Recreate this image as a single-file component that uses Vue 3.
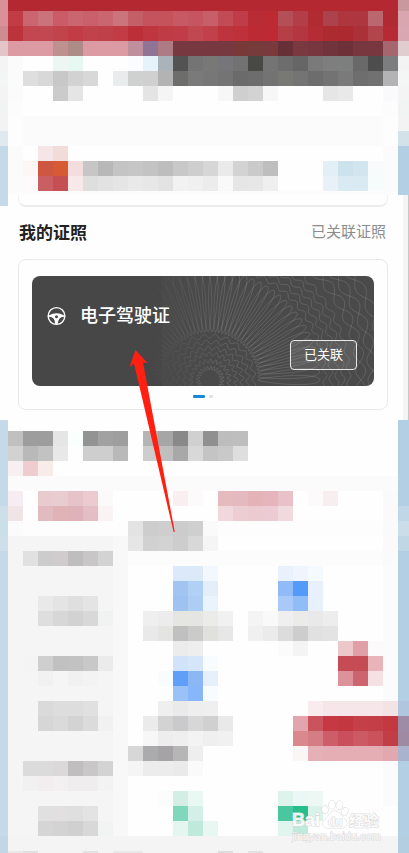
<template>
  <main class="page">
    <div class="mosaic" aria-hidden="true">
      <div v-for="(row, r) in topRows" :key="r" class="mosaic-row" :class="row.size">
        <i v-for="(color, c) in row.cells" :key="c" :style="{ background: color }"></i>
      </div>
    </div>

    <section class="licenses">
      <div class="prev-card">
        <span class="prev-edge"></span>
        <span class="prev-end"></span>
      </div>

      <header class="section-head">
        <h2>我的证照</h2>
        <a href="#">已关联证照</a>
      </header>

      <div class="card">
        <article class="license">
          <svg class="guilloche" viewBox="0 0 342 110" preserveAspectRatio="xMaxYMid slice" aria-hidden="true">
            <defs>
              <linearGradient id="fade" gradientUnits="userSpaceOnUse" x1="120" y1="0" x2="190" y2="0">
                <stop offset="0" stop-color="#fff" stop-opacity="0" />
                <stop offset="1" stop-color="#fff" stop-opacity="0.15" />
              </linearGradient>
            </defs>
            <rect class="tint" x="130" y="0" width="212" height="110" />
            <path v-for="(d, i) in curves" :key="i" :d="d" stroke="url(#fade)" />
          </svg>
          <h3 class="license-name">
            <svg class="wheel" viewBox="0 0 20 20" aria-hidden="true">
              <circle cx="10" cy="10" r="8.8" fill="none" stroke="#fff" stroke-width="1.5" />
              <path d="M1.8 9.4 Q6 7 10 7 Q14 7 18.2 9.4 L18 10.8 Q14.6 10.8 13 12.8 Q11.6 14.6 11.4 18.4 L8.6 18.4 Q8.4 14.6 7 12.8 Q5.4 10.8 2 10.8 Z" fill="#fff" />
              <circle cx="10" cy="10.8" r="1.6" fill="#4b4a4b" />
            </svg>
            <span>电子驾驶证</span>
          </h3>
          <button class="linked-btn" type="button">已关联</button>
        </article>
        <div class="dots">
          <span class="dot active"></span>
          <span class="dot"></span>
        </div>
      </div>
    </section>

    <div class="mosaic" aria-hidden="true">
      <div v-for="(row, r) in bottomRows" :key="r" class="mosaic-row" :class="row.size">
        <i v-for="(color, c) in row.cells" :key="c" :style="{ background: color }"></i>
      </div>
    </div>

    <svg class="arrow" viewBox="0 0 46 183" aria-hidden="true">
      <path d="M6.5 0 L18.5 13 L14 12.5 L45.8 182 L44.6 182 L5 13.5 L0.5 17 Z" fill="#ff2012" />
    </svg>

    <svg class="watermark" viewBox="0 0 94 46" role="img" aria-label="Baidu经验">
      <g class="wm-shape">
        <ellipse cx="34" cy="9.5" rx="3" ry="4" transform="rotate(-15 34 9.5)" />
        <ellipse cx="41" cy="4.8" rx="3.2" ry="4.2" />
        <ellipse cx="48.5" cy="5.2" rx="3.2" ry="4.2" transform="rotate(12 48.5 5.2)" />
        <ellipse cx="54" cy="11.5" rx="3" ry="4" transform="rotate(25 54 11.5)" />
        <path d="M44 11 C48 11 50 15 53 18 C58 23 56 28 50 28 L38 28 C31 28 30 23 35 18 C38 15 40 11 44 11 Z" />
      </g>
      <text x="1" y="26" class="wm-bai">Bai</text>
      <text x="37" y="26" class="wm-du">du</text>
      <text x="58" y="26" class="wm-cn">经验</text>
      <text x="1" y="40" class="wm-url">jingyan.baidu.com</text>
    </svg>
  </main>
</template>

<script setup>
const COLUMNS = 28;

// cells: groups split by "|", each one a start column followed by its colors
const makeRow = (left, base, right, cells = '', size = '') => {
  const colors = Array(COLUMNS).fill('#' + base);
  colors[0] = '#' + left;
  colors[COLUMNS - 1] = '#' + right;
  for (const group of cells.split('|').filter(Boolean)) {
    const [start, ...list] = group.trim().split(' ');
    list.forEach((color, i) => {
      colors[Number(start) - 1 + i] = '#' + color;
    });
  }
  return { cells: colors, size };
};

const BLUE_L = 'c5dae8';
const BLUE_R = 'b3cfe3';

const topRows = [
  makeRow('d99098', 'b42832', 'c9989f', '', 'first'),
  makeRow('d99098', 'b12a31', 'd9a5af', '2 c13c45 c96670 cb727a c95c66 cb6570 c9606b c9666f cb747c c55f67 c3535c c5535b c65964 c45561 c65f68 c14c56 bf3c48 b92c35 bd2a31 b44f57 b33e48 b02b32 ac424b ad363f ad363f bb6770'),
  makeRow('cf8c90', 'b62a35', 'd9a7b1', '2 bd333c c24750 c24750 c1434b c13c45 c1424b c0404a c13c45 bd2f38 bf3641 c03c45 c03c46 c14851 c2404a bd343e bf313a bc2b34 be2a33 b53e47 b43640 b42d36 ac2a30 ac292f ac3037 b2454c'),
  makeRow('e3c4c8', 'dc9aa2', 'e0cdd0', '5 be918f ad8b86|10 c08f9d 907495 ae7b84 783840 783840 783840 783840 793939 773b3b 7a3a3d 672f36 7a383f 78363e 71343c 6e3138 78363e 78363e a5666e'),
  makeRow('f4f4f4', 'fefefe', 'f3f3f3', '2 fbfbfb|5 edf6f2 e7f8f2|10 fbfcff e6f3fb abb3ba 535353 747474 787876 767579 737272 484844 747474 6d6d6d 666666 7a7a7a 7e7e7e 7b7f7e 696969 4d4d4d 7c7d7f'),
  makeRow('f4f5f5', 'fefefe', 'f4f6f5', '2 fbfbfb dedede d8d8d8 c8c8c8 d2d2d2 d8d8d8|9 e9ecec cfd1d0 d0d0d0 b3b3b3 6d6d6b 7a7a7a 777777 747474 6b6b6b 6d6d6d 737373 787875 747474 6d6d6d 737373 7a7a7a 6e6e6e 717171 b3b3b5'),
  makeRow('f4f4f4', 'fefefe', 'f4f4f4', '2 fbfbfb|5 cbcbcb e5e5e5|11 e4e4e4 f5f5f5|16 f7f7f7 cfcfcf d3d3d3 f7f7f7|23 e6e6e6 e9e9e9|27 fafafc'),
  makeRow('f2f4f3', 'fefefe', 'f2f3f3', '2 fcfcfc|27 fcfcfc'),
  makeRow('f2f3f2', 'fbfbfb', 'f3f3f3', '2 fdfdfd|27 fdfdfd'),
  makeRow('dfe9ef', 'fbfbfb', 'd3e1e9', '2 fdfdfd|27 fdfdfd'),
  makeRow(BLUE_L, 'fefefe', BLUE_R, '2 fbfbfb|4 f5e5e6 f1dcda|27 fbfbfb'),
  makeRow(BLUE_L, 'fefefe', BLUE_R, '2 fbfbfb fcf7f5 cf5641 d65b35 f3dddf c6c6c6 b8b8b8 c4c4c4 c6c6c6 c3c3c3 bdbdbd c8c8c8 cecece d6d6d6 eaeaea d3d3d3 cacaca bebebe|23 e3eff6 cce3ee d2e6f0 f7fbfb fbfbfb'),
  makeRow(BLUE_L, 'fefefe', BLUE_R, '2 fbfbfb fcfafa c95f63 c54f52 f7e9e9 dedede e2e2e2 e5e5e5 e9e9e9 e7e7e7 e3e3e3 f2f2f2 f0f0f0 ececec f9f9f9 e6e6e6 e7e7e7 efefef|23 e7f1f6 d9eaf2 d9eaf2 f6fbfb fbfbfb'),
  makeRow(BLUE_L, 'fcfcfc', BLUE_R, '', 'thin'),
];

const plain = (cells) => makeRow(BLUE_L, 'fefefe', BLUE_R, cells);
// rows that have the grey category list on the left
const withMenu = (cells, left = BLUE_L, right = BLUE_R) =>
  makeRow(left, 'fefefe', right, '2 f5f5f5 f5f5f5 f5f5f5 f5f5f5 f5f5f5 f5f5f5 f5f5f5 f8f8f8|' + cells);

const bottomRows = [
  makeRow(BLUE_L, 'fefefe', BLUE_R, '', 'first'),
  plain('2 c0c0c0 9d9d9d 9d9d9d e5e5e5 fafffd 939393 a1a1a1 9e9e9e|11 b5b5b5 a6a6a6 898989 d0d0d0 909090 bdbdbd bebebe'),
  plain('2 d2d2d2 b9b9b9 c2c2c2 e8e8e8 fefefe cecece cecece b9b9b9|11 cdcdcd bfbfbf a8a8a8 d8d8d8 c4c4c4 c9c9c9 dedede'),
  plain('2 f8eff0 efccd0 f8eceb'),
  makeRow(BLUE_L, 'fbfbfb', BLUE_R),
  plain('2 f7ecf1 fefefe e9cacf e9cccf e6c3c9 ebcbd0 fafafa|13 f9eef0 fdfafb|16 e6bbbe e5b9c0 e3b3b8 e5b4bd e8c2c8|22 fcfafb f7efef|27 fafafa'),
  makeRow('cddfe8', 'fefefe', 'bfd7e6', '2 f1e4e7 fefefe e1bbc0 e0b3b7 dfb1b9 e4bec4 f9f4f3|16 f0d8dc eccdd2 ebcbcf ecccd2 f1dadd|27 fafafa'),
  makeRow('cbdfea', 'fdfdfd', 'cbdde9', '2 fbfbfb|10 e3e3e3 cdcdce cecece cccccd cfcfcf fafafa|27 fafafa'),
  withMenu('10 e6e6e6 d1d1d1 d3d3d3 cdcdcd d8d8d8 f5f5f5|27 fafafa', 'cddfea', 'c0d7e5'),
  withMenu('3 e1e1e1 cbcccb d0cccd bebebe c8c6c7 d3d3d3|10 fcfcfc fcfcfc fcfcfc fcfcfc fcfcfc fcfcfc fcfcfc fcfcfc fcfcfc fcfcfc fcfcfc fcfcfc fcfcfc fcfcfc fcfcfc fcfcfc fcfcfc fafafa'),
  withMenu('13 dbe9fa dce9f8 f3f8ff|20 e9f1fd eff4fd f5faff|27 fbfbfb'),
  withMenu('13 a2c4f1 b1d0f5 e4eef9|20 91bbf7 549af9 e7f0fc|27 fbfbfb'),
  withMenu('4 e9e9e9 e4e4e4 dfdfdf e4e4e4|13 9ec3f1 adcdf5 eaf3fb|20 a9caf8 90bdf8 e8f0fb|27 fbfbfb'),
  withMenu('4 dedede d7d7d7 d2d2d2 d8d8d8 f0f3f2|11 efefef ececec e5e5e2 e5e5e2 ebebe9 f1f1f1|18 f4f4f4 f9f9f9 efefef ebebe9 e9e9e9 ededed|27 fbfbfb'),
  withMenu('11 e9e9e9 e4e4e1 c0c0c0 cbcbc9 e0e0dd e7e7e7|18 f0f0f0 ebebeb dcdcdc cdcdcd e1e1e1 e3e3e3|27 fbfbfb'),
  withMenu('13 ececec eeeeee|20 fbfbfb f4f4f4|24 ecc8cb e1a0a7 fcfafa fbfbfb'),
  withMenu('3 f4f4f4 cfcfcf c1c1c1 c2c2c2 c8c8c8 ebebeb|13 d1e3fb d5e6fb f8fcff|24 c54b54 c54b54 e8b3b9 fbfbfb'),
  withMenu('4 f1f1f1 f5f5f5 f1f1f1 f3f3f3|12 f9fcff 5f9ff8 8bb7f4 e5f0fb|24 dc929b cc656f f5e1e3 fbfbfb'),
  withMenu('13 9bc2f7 88b6fb f8fbff|27 fbfbfb'),
  withMenu('4 dadada dddddd dddddd e0e0e0|12 efefef eaeaea eeeeee efefef|22 f8ecee f6e6e9 f6e6e9 f6e6e9 f6e6e9 f3e3e5 b0c6df'),
  withMenu('4 d6d6d6 dadada d3d3d3 dbdbdb f1f1f1|11 ebebeb d3d3d3 cacacd d7d7d7 d0d0d0 e9e9e9|21 e2a4ad cb535e c43943 c33740 c53f48 c43e47 c33841 9e8ba5'),
  withMenu('11 f7f7f7 ededed efefef f3f3f3 efefef f1f1f1|21 da878e d47d85 cd5d69 c94f5c cb5a65 c9525b c23e46 9f8aa3'),
  withMenu('10 d7d7d7 abaaad a5a3a6 b6b6b6 eeeeee|21 faf6f6 e5b1b6 e5aeb4 e5aeb4 e5aeb4 e5aeb4 e1a9af aab3ce'),
  withMenu('3 dbdbdb dbdbdb dad8d9 c0bebf c9c7c8 d3d3d3|10 f5f5f5 ececed ececed eaeaea fafafa|27 fbfbfb'),
  withMenu('3 f1f1f1 f2eef0 f3f0f2 efedee efedee f3f3f3|27 fbfbfb'),
  withMenu('12 fafdfc d3efe5 e9f8f3|20 def3ec eaf8f5 edf8f5|27 fbfbfb'),
  withMenu('4 e0e0e0 e2dfe0 dfdfdf e3e3e3|13 7fd8bb d4efe7|20 49c89f 25be8c dbf2ea'),
  withMenu('4 d5d5d5 d3d3d3 d0d0d0 d8d8d8 f1f4f3|13 e5f6f0 bfeadb e9f7f2|20 e0f5ee bfeadc'),
  makeRow('c1d7e5', 'f4f4f4', 'b3cee0'),
  makeRow('c1d7e5', 'f4f4f4', 'b3cee0', '2 e8e8e8 e0e0e0|7 e2e2e2|9 e8e8e8 e8e8e8|16 dddddd|18 e2e2e2', 'last'),
];

const CENTER = { x: 178, y: 104 };

const toPath = (steps, pointAt) => {
  const points = [];
  for (let i = 0; i <= steps; i++) {
    const [r, a] = pointAt((i / steps) * Math.PI * 2);
    points.push(`${(CENTER.x + r * Math.cos(a)).toFixed(1)} ${(CENTER.y + r * Math.sin(a)).toFixed(1)}`);
  }
  return 'M' + points.join('L');
};

// banknote-like ring: radius swings around a circle as the angle turns
const rosette = (radius, swing, waves, phase) =>
  toPath(900, (a) => [radius + swing * Math.sin(waves * a + phase), a]);

// long thin loop that points away from the center
const petal = (angle) =>
  toPath(40, (t) => [79 + 31 * Math.cos(t), angle + 0.055 * Math.sin(t)]);

const curves = [
  ...[12, 19, 26, 32, 38, 44].map((r, i) => rosette(r, 2, 24, i)),
  ...Array.from({ length: 44 }, (_, i) => petal(Math.PI + (i / 43) * Math.PI)),
  ...[115, 121, 127, 133, 139].map((r) => rosette(r, 2, 54, r / 4)),
  rosette(151, 5, 26, 0),
  rosette(151, 5, 26, Math.PI),
  rosette(163, 5, 26, 1.5),
  rosette(163, 5, 26, 1.5 + Math.PI),
  rosette(176, 5, 26, 0),
  rosette(176, 5, 26, Math.PI),
];
</script>

<style>
body {
  margin: 0;
}
</style>

<style scoped>
.page {
  position: relative;
  overflow: hidden;
  background: #fff;
  font-family: "Liberation Sans", "Noto Sans CJK SC", sans-serif;
}
.mosaic-row {
  display: grid;
  grid-template-columns: 8fr repeat(26, 15fr) 11fr;
  height: 15px;
}
.mosaic-row.first {
  height: 11px;
}
.mosaic-row.thin {
  height: 4px;
}
.mosaic-row.last {
  height: 2px;
}
.licenses {
  background: #fefefe;
  border-right: 1px solid #c8c8c8;
  box-shadow: inset -5px 0 #f4f4f4;
  padding-bottom: 10px;
}
.prev-card {
  display: flex;
  gap: 10px;
  height: 12px;
  padding-right: 20px;
}
.prev-edge {
  width: 8px;
  height: 11px;
  background: #c5dae8;
}
.prev-end {
  flex: 1;
  border: 1px solid #f2f2f2;
  border-top: 0;
  border-bottom: 2px solid #ececec;
  border-radius: 0 0 8px 8px;
}
.section-head {
  display: flex;
  align-items: flex-start;
  justify-content: space-between;
  height: 52px;
  box-sizing: border-box;
  padding: 14px 22px 0 19px;
}
.section-head h2 {
  margin: 0;
  font-size: 17px;
  line-height: 26px;
  font-weight: 700;
  color: #222;
}
.section-head a {
  font-size: 15px;
  line-height: 22px;
  color: #8c8c8c;
  text-decoration: none;
}
.card {
  margin: 0 20px 0 18px;
  padding: 16px 13px 11px;
  border: 1px solid #e9e9eb;
  border-radius: 8px;
}
.license {
  position: relative;
  display: flex;
  flex-direction: column;
  justify-content: space-between;
  overflow: hidden;
  height: 110px;
  box-sizing: border-box;
  padding: 26px 17px 16px 15px;
  border-radius: 8px;
  background: #484748;
}
.guilloche {
  position: absolute;
  inset: 0;
  width: 100%;
  height: 100%;
}
.guilloche path {
  fill: none;
  stroke-width: 0.8;
}
.tint {
  fill: rgba(255, 255, 255, 0.02);
}
.license-name {
  position: relative;
  display: flex;
  align-items: center;
  gap: 14px;
  margin: 0;
  font-size: 18px;
  line-height: 28px;
  font-weight: 500;
  color: #fff;
}
.wheel {
  width: 19px;
  height: 20px;
}
.linked-btn {
  position: relative;
  align-self: flex-end;
  width: 67px;
  height: 30px;
  padding: 0;
  border: 1px solid #e8e8e8;
  border-radius: 4px;
  background: rgba(255, 255, 255, 0.1);
  font: inherit;
  font-size: 13px;
  line-height: 20px;
  color: #fff;
}
.dots {
  display: flex;
  justify-content: center;
  gap: 4px;
  padding-top: 9px;
}
.dot {
  width: 4px;
  height: 3px;
  border-radius: 1px;
  background: #dfe3e6;
}
.dot.active {
  width: 12px;
  background: #1788da;
}
.arrow {
  position: absolute;
  top: 350px;
  left: 129px;
  width: 46px;
  height: 183px;
}
.watermark {
  position: absolute;
  right: 24px;
  bottom: 7px;
  width: 94px;
  height: 46px;
}
.wm-shape,
.watermark text {
  fill: rgba(255, 255, 255, 0.85);
  stroke: #dadada;
  stroke-width: 1;
  paint-order: stroke;
}
.wm-bai {
  font-size: 18px;
  font-weight: 700;
}
.wm-du {
  font-size: 12px;
  font-weight: 700;
}
.wm-cn {
  font-size: 15px;
  font-weight: 700;
}
.wm-url {
  font-size: 11px;
}
</style>
